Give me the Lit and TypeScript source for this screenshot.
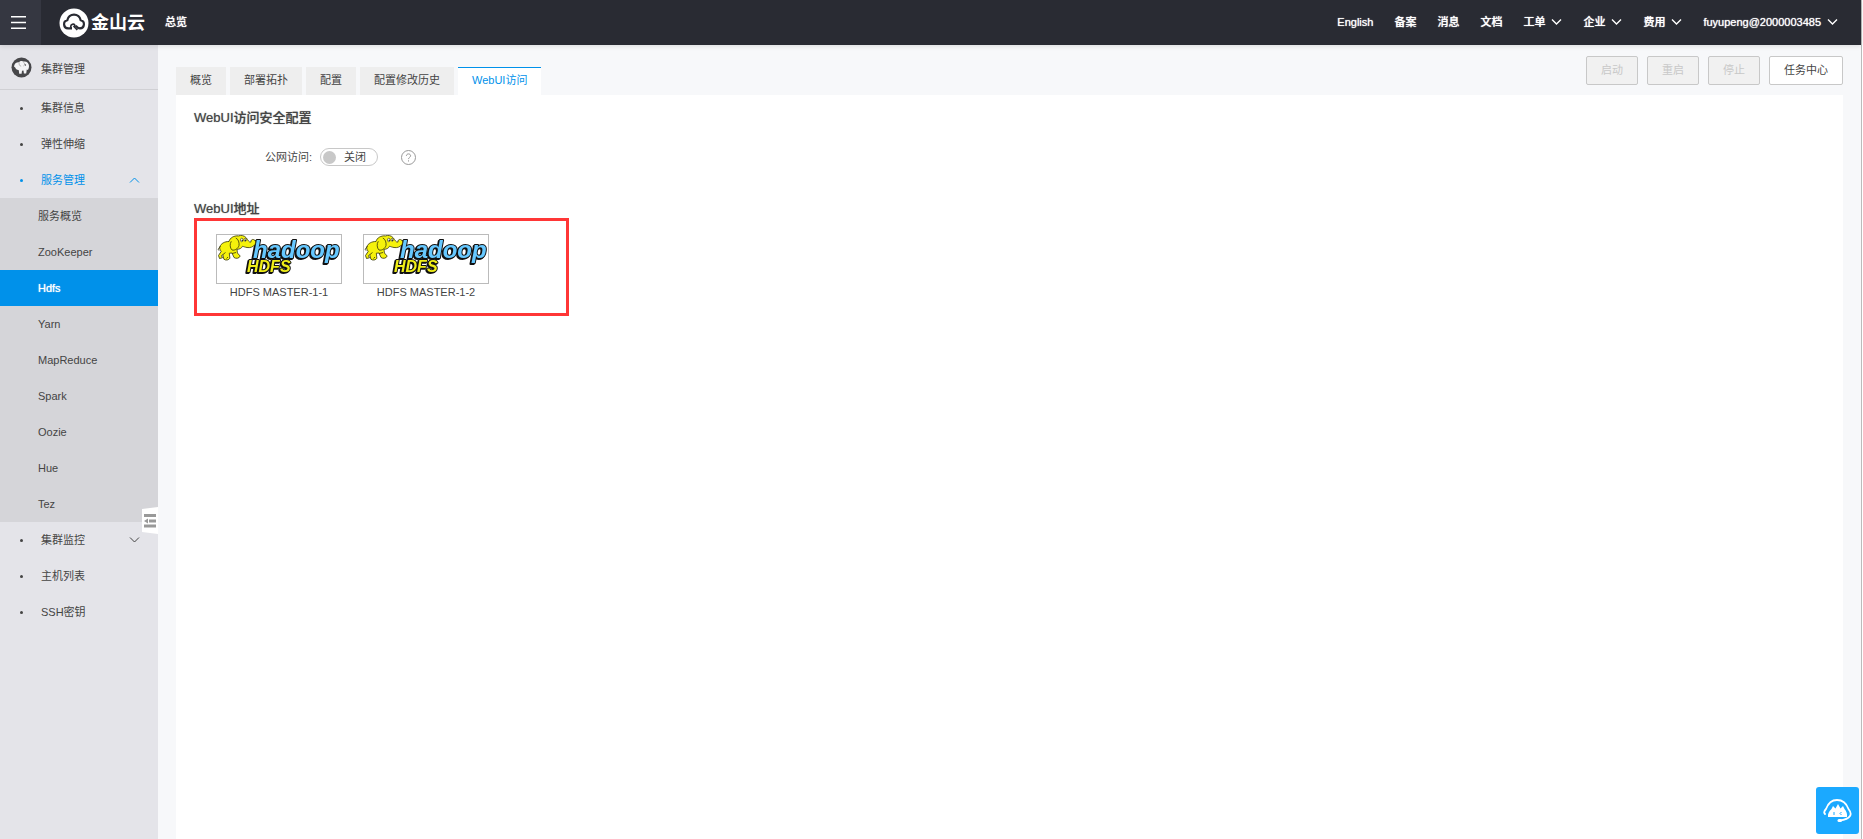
import { LitElement, html, svg, css } from "lit";
import { customElement, property, state } from "lit/decorators.js";
import { classMap } from "lit/directives/class-map.js";

const base = css`
  *, *::before, *::after { box-sizing: border-box; }
  a { color: inherit; text-decoration: none; }
  ul { list-style: none; margin: 0; padding: 0; }
  svg { display: block; flex: none; }
  button { font: inherit; color: inherit; cursor: pointer; margin: 0; }
`;

const chevron = (cls: string, up = false) => html`
  <svg class=${cls} width="11" height="8" viewBox="0 0 11 8" fill="none" stroke="currentColor" aria-hidden="true">
    <path d=${up ? "M1 6.5 5.5 2 10 6.5" : "M1 1.5 5.5 6 10 1.5"} />
  </svg>`;

@customElement("top-bar")
class TopBar extends LitElement {
  static styles = [base, css`
    :host {
      display: flex; align-items: center; height: 45px; color: #fff;
      background: #292b33; box-shadow: 0 1px 5px rgba(0, 0, 0, 0.12); z-index: 2;
      font-weight: 500; text-shadow: 0 0 1px #fff;
    }
    .menu {
      width: 41px; height: 45px; padding: 0 0 0 11px; border: 0;
      background: #353741; color: #fff;
    }
    .brand { display: flex; align-items: center; gap: 2px; margin-left: 18px; }
    .name { font-size: 18px; line-height: 24px; font-weight: 700; text-shadow: none; }
    .overview { margin-left: 20px; padding-bottom: 2px; }
    .links { display: flex; gap: 21px; margin-left: auto; padding: 0 23px 2px 0; }
    .links a { display: flex; align-items: center; gap: 6px; }
    .chev { stroke-width: 1.4; }
  `];

  private links: [string, boolean][] = [
    ["English", false], ["备案", false], ["消息", false], ["文档", false],
    ["工单", true], ["企业", true], ["费用", true], ["fuyupeng@2000003485", true],
  ];

  render() {
    return html`
      <button class="menu" aria-label="菜单">
        <svg width="15" height="15" viewBox="0 0 15 15" stroke="currentColor" stroke-width="1.6">
          <path d="M0 1.7h15M0 7.5h15M0 13.3h15" />
        </svg>
      </button>
      <a class="brand" href="#">
        <svg width="30" height="30" viewBox="0 0 30 30">
          <circle cx="15" cy="15" r="14.5" fill="#fff" />
          <path d="M13 20.300H9a4.100 4.100 0 0 1-.7-8.100 6.800 6.800 0 0 1 13.400 0 4.100 4.100 0 0 1-.7 8.100c-2.200 0-3.200-1.200-4.300-2.600"
            fill="none" stroke="#292b33" stroke-width="2.200" />
          <path d="M12.800 20.300c-1.500-.6-1.500-3.300.6-4 2.300-.5 3 1.300 2.300 2.500M14.500 18l3.800 4" fill="none" stroke="#292b33" stroke-width="1.700" />
        </svg>
        <span class="name">金山云</span>
      </a>
      <a class="overview" href="#">总览</a>
      <nav class="links">
        ${this.links.map(([t, more]) => html`<a href="#">${t}${more ? chevron("chev") : ""}</a>`)}
      </nav>`;
  }
}

@customElement("side-bar")
class SideBar extends LitElement {
  static styles = [base, css`
    :host { display: block; position: relative; background: #e4e4e9; }
    .head {
      display: flex; align-items: center; gap: 9px; height: 45px;
      padding-left: 11px; border-bottom: 1px solid #d0d0d4;
    }
    .head span { padding-top: 3px; }
    .item { display: flex; align-items: center; height: 36px; padding-left: 20px; }
    .item::before {
      content: ""; width: 3px; height: 3px; border-radius: 50%;
      background: currentColor; margin-right: 18px;
    }
    .open { color: #0091ea; }
    .arrow { margin-left: auto; margin-right: 18px; }
    .sub { background: #d5d5d9; }
    .sub a { display: flex; align-items: center; height: 36px; padding-left: 38px; }
    .sub .active { background: #0091ea; color: #fff; font-weight: 500; text-shadow: 0 0 1px #fff; }
    .fold {
      position: absolute; right: 0; top: 462px; width: 16px; height: 27px;
      padding: 0 0 0 2px; border: 0; background: #fff; color: #999;
      clip-path: polygon(0 7%, 100% 0, 100% 100%, 0 93%);
    }
  `];

  private services = ["服务概览", "ZooKeeper", "Hdfs", "Yarn", "MapReduce", "Spark", "Oozie", "Hue", "Tez"];

  render() {
    return html`
      <div class="head">
        <svg width="21" height="21" viewBox="0 0 21 21">
          <circle cx="10.500" cy="10.500" r="10" fill="#47474a" />
          <path d="M3 9.500c.2-3 2.500-4.500 5-4.300 1-1.500 3.500-1.600 4.500-.6 3-.6 5.500 1.500 5.500 4.500 0 1.500-.4 3-1 3.800l-1.200-.4-.6 4h-2.300l-.4-3-1.500.2-.4 3H8.200l-.4-3.500C5.500 13 4.600 12 4.400 10.800z" fill="#f4f4f6" />
          <path d="M8.300 5.500c-.6 1.800.2 3.600 1.900 3.700M12.500 5.200c1.500 1 1.400 3-.1 3.800" fill="none" stroke="#999" stroke-width=".7" />
          <circle cx="14.400" cy="8" r=".7" fill="#47474a" />
        </svg>
        <span>集群管理</span>
      </div>
      <nav>
        <a class="item" href="#">集群信息</a>
        <a class="item" href="#">弹性伸缩</a>
        <a class="item open" href="#">服务管理${chevron("arrow", true)}</a>
        <div class="sub">
          ${this.services.map((s) => html`<a href="#" class=${classMap({ active: s === "Hdfs" })}>${s}</a>`)}
        </div>
        <a class="item" href="#">集群监控${chevron("arrow")}</a>
        <a class="item" href="#">主机列表</a>
        <a class="item" href="#">SSH密钥</a>
      </nav>
      <button class="fold" aria-label="收起">
        <svg width="12" height="14" viewBox="0 0 12 14" fill="currentColor">
          <path d="M0 0h12v3H0zM5 5.500H12v3H5zM0 10.500h12v3H0zM4 4.500v5L0 7z" />
        </svg>
      </button>`;
  }
}

@customElement("hdfs-card")
class HdfsCard extends LitElement {
  @property() label = "";

  static styles = [base, css`
    :host { display: block; width: 126px; text-align: center; }
    .frame { display: block; border: 1px solid #bbb; }
    .title { display: block; line-height: 16px; }
    text { paint-order: stroke; stroke: #111; stroke-width: 2px; stroke-linejoin: round; filter: drop-shadow(-1px 1px 0 #111); }
    .word { font: italic 700 24px "Liberation Sans", Arial, sans-serif; fill: #66c8ff; }
    .small { font: italic 700 16px "Liberation Sans", Arial, sans-serif; fill: #f0ee18; }
  `];

  render() {
    return html`
      <a href="#">
        <span class="frame">
          <svg width="124" height="48" viewBox="0 0 124 48">
            ${svg`<text class="word" x="36" y="23">hadoop</text>
            <text class="small" x="30" y="37">HDFS</text>`}
            <g fill="#f5f20c" stroke="#34340a" stroke-width=".8" stroke-linejoin="round">
              <path d="M3 11.500C4 8.500 7.500 6.500 12 6.500c1-3.800 5-6 9.500-5.600 2.500-1 6-.4 7.800 2 1.600 2 2.500 4.600 4.700 4.200-.4-1.600.8-3 2.500-2.600 2.200.5 2.700 3 1.500 5-1.600 2.400-5 3.600-8 3-2-.3-3.500-1-4.500-1.200-1 2-3 3-5.500 3l.4 3.700 2.800 3c-.8 2.400-4.200 3-6.200 1.500l-2-4.500-2.700.2.6 5c-1 2-4.200 2.500-6 1L5.700 19.500l-1.200 1.300 1 2-3 .7L1.500 20.500l2.800-4.300C2.700 15 2.400 13.200 3 11.500z" />
              <path d="M14.300 6.300c-1.700 2.400-1.500 6.700.7 8.700 2.800.8 6-1.300 7-4.500.4-3-.6-6.300-3.200-7.500" />
              <path d="M3.500 11 1 14.500l1.400 1M6 19.500l2.500-2M15 18.500l4-1M9.500 23.500l1.500-1.500" fill="none" />
            </g>
            <ellipse cx="24.800" cy="5" rx="1.300" ry="1.800" fill="#fff" stroke="#34340a" stroke-width=".6" />
            <ellipse cx="28.200" cy="4.800" rx="1.100" ry="1.600" fill="#fff" stroke="#34340a" stroke-width=".6" />
            <circle cx="25.200" cy="5.400" r=".6" /><circle cx="28.500" cy="5.200" r=".6" />
          </svg>
        </span>
        <span class="title">${this.label}</span>
      </a>`;
  }
}

@customElement("app-root")
class AppRoot extends LitElement {
  @state() private open = false;

  static styles = [base, css`
    :host {
      display: grid; grid-template: auto 1fr / 158px 1fr;
      min-height: 100vh; margin-right: 1px; border-right: 1px solid #bbb;
      background: #f7f8fa; color: #444;
      font: 11px/16px "Liberation Sans", Arial, "Noto Sans CJK SC", sans-serif;
    }
    top-bar { grid-column: 1 / -1; }
    main { display: flex; flex-direction: column; padding: 0 18px; min-width: 0; }
    .bar { display: flex; justify-content: space-between; height: 50px; }
    .tabs { display: flex; gap: 4px; align-self: flex-end; }
    .tab { display: block; padding: 5px 14px 7px; background: #eee; }
    .current { background: #fff; color: #0091ea; box-shadow: inset 0 1px #0091ea; }
    .actions { display: flex; gap: 9px; padding-top: 11px; }
    .action {
      height: 29px; padding: 0 14px 2px; border: 1px solid #c8c8c8; border-radius: 2px;
      background: #fff; white-space: nowrap;
    }
    .action:disabled { background: #f1f1f1; color: #c8c8c8; cursor: default; }
    .panel { flex: 1; background: #fff; padding: 14px 18px; }
    h2 { margin: 0; font-size: 13px; line-height: 18px; font-weight: 500; text-shadow: 0 0 1px #888; }
    .row { display: flex; align-items: center; margin: 20px 0 33px; padding-left: 71px; height: 20px; }
    .switch {
      display: flex; align-items: center; gap: 8px; width: 58px; height: 18px;
      margin-left: 8px; padding-left: 2px; border: 1px solid #c8c8c8; border-radius: 9px; cursor: pointer;
    }
    .switch input { appearance: none; width: 13px; height: 13px; margin: 0; border-radius: 50%; background: #c8c8c8; }
    .switch input:checked { background: #0091ea; }
    .help { margin-left: 23px; padding: 0; border: 0; background: none; color: #999; }
    .addresses {
      display: flex; gap: 21px; width: 375px; height: 98px; padding: 13px 19px;
      border: 3px solid #ff3636;
    }
    .chat {
      position: fixed; right: 4px; bottom: 5px; width: 43px; height: 47px;
      display: grid; place-items: center; padding: 0; border: 0; border-radius: 3px; background: #1ba9ff;
    }
  `];

  private tabs = ["概览", "部署拓扑", "配置", "配置修改历史", "WebUI访问"];

  render() {
    return html`
      <top-bar></top-bar>
      <side-bar></side-bar>
      <main>
        <div class="bar">
          <nav class="tabs">
            ${this.tabs.map((t, i) => html`<a href="#" class=${classMap({ tab: true, current: i === 4 })}>${t}</a>`)}
          </nav>
          <div class="actions">
            ${["启动", "重启", "停止"].map((t) => html`<button class="action" disabled>${t}</button>`)}
            <button class="action">任务中心</button>
          </div>
        </div>
        <section class="panel">
          <h2>WebUI访问安全配置</h2>
          <div class="row">
            <label for="public">公网访问:</label>
            <label class="switch">
              <input id="public" type="checkbox" .checked=${this.open}
                @change=${(e: Event) => (this.open = (e.target as HTMLInputElement).checked)} />
              <span>${this.open ? "开启" : "关闭"}</span>
            </label>
            <button class="help" aria-label="帮助">
              <svg width="15" height="15" viewBox="0 0 15 15" fill="none" stroke="currentColor">
                <circle cx="7.500" cy="7.500" r="7" />
                <path d="M5.400 5.900c0-1.200.9-2 2.100-2s2.100.8 2.100 1.900c0 1.500-2.100 1.600-2.100 3.300M7.500 10.300v1.200" />
              </svg>
            </button>
          </div>
          <h2>WebUI地址</h2>
          <div class="addresses">
            <hdfs-card label="HDFS MASTER-1-1"></hdfs-card>
            <hdfs-card label="HDFS MASTER-1-2"></hdfs-card>
          </div>
        </section>
      </main>
      <button class="chat" aria-label="客服">
        <svg width="29" height="25" viewBox="0 0 29 25" fill="none" stroke="#fff" stroke-width="1.800">
          <path d="M2 16C.5 14.500 1.500 12.500 3 11 5 5.500 9 2 14 2s9.500 3.500 11.500 9c2 2.500 2.500 5.500 1.500 7-1.500 2.500-6 4-10.500 4.500" stroke-linecap="round" />
          <path d="M5 19c-.5-3 1-6 3.500-8L10 8l2.500 2.500L15 6l2.500 4.500L20 8l1.500 3c2 2 3 5 2.500 8z" fill="#fff" stroke="none" />
          <path d="M11 14v3M18.500 14 17 15.500l1.500 1.500" stroke="#1ba9ff" stroke-width="1" />
          <rect x="14.500" y="21" width="4.500" height="3" rx="1.500" fill="#fff" stroke="none" />
        </svg>
      </button>`;
  }
}
